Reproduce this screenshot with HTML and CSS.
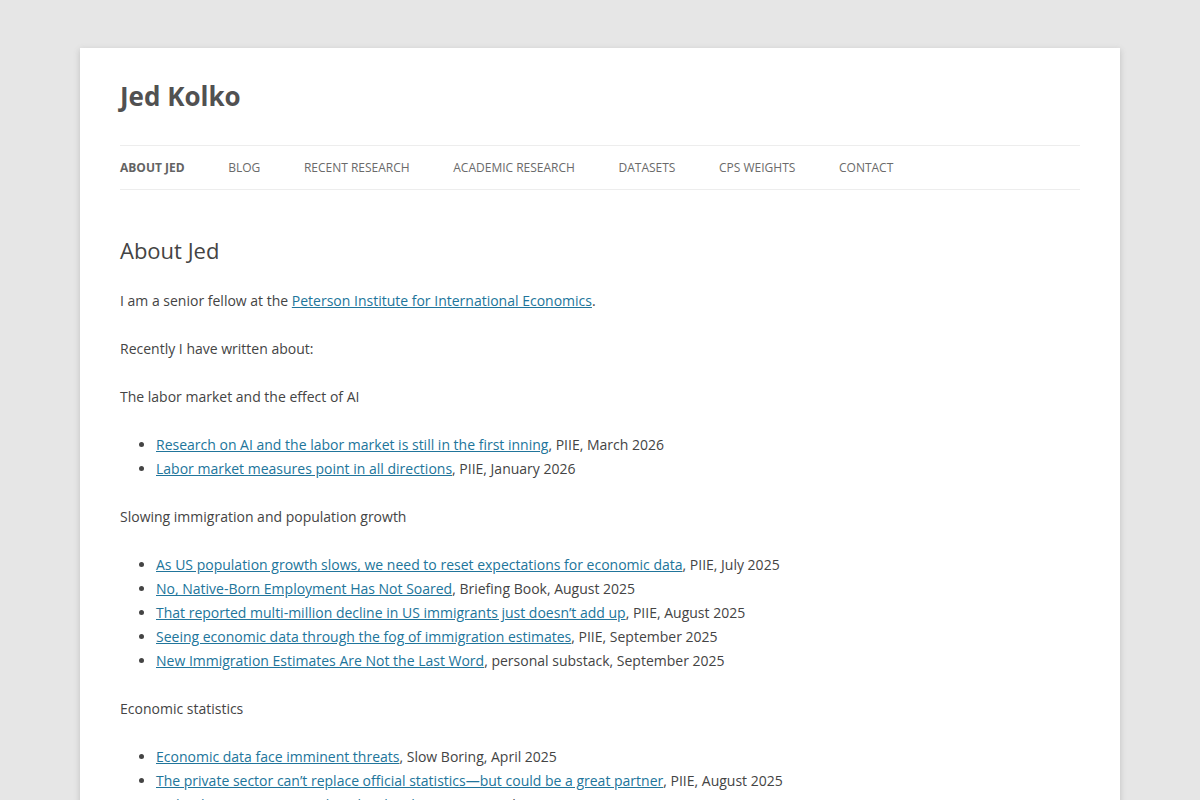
FILE: index.html
```html
<!DOCTYPE html>
<html lang="en">
<head>
  <meta charset="UTF-8">
  <meta name="viewport" content="width=device-width, initial-scale=1.0">
  <title>About Jed | Jed Kolko</title>
  <link rel="stylesheet" href="styles.css">
</head>
<body>
  <div class="site">
    <!-- Header -->
    <header class="site-header">
      <h1 class="site-title"><a href="#">Jed Kolko</a></h1>
      <nav class="main-navigation">
        <ul class="nav-menu">
          <li class="current"><a href="#">About Jed</a></li>
          <li><a href="#">Blog</a></li>
          <li><a href="#">Recent Research</a></li>
          <li><a href="#">Academic Research</a></li>
          <li><a href="#">Datasets</a></li>
          <li><a href="#">CPS Weights</a></li>
          <li><a href="#">Contact</a></li>
        </ul>
      </nav>
    </header>

    <!-- Content -->
    <main class="site-content">
      <article class="page">
        <header class="entry-header">
          <h1 class="entry-title">About Jed</h1>
        </header>
        <div class="entry-content">
          <p>I am a senior fellow at the <a href="#">Peterson Institute for International Economics</a>.</p>
          <p>Recently I have written about:</p>

          <p>The labor market and the effect of AI</p>
          <ul>
            <li><a href="#">Research on AI and the labor market is still in the first inning</a>, PIIE, March 2026</li>
            <li><a href="#">Labor market measures point in all directions</a>, PIIE, January 2026</li>
          </ul>

          <p>Slowing immigration and population growth</p>
          <ul>
            <li><a href="#">As US population growth slows, we need to reset expectations for economic data</a>, PIIE, July 2025</li>
            <li><a href="#">No, Native-Born Employment Has Not Soared</a>, Briefing Book, August 2025</li>
            <li><a href="#">That reported multi-million decline in US immigrants just doesn’t add up</a>, PIIE, August 2025</li>
            <li><a href="#">Seeing economic data through the fog of immigration estimates</a>, PIIE, September 2025</li>
            <li><a href="#">New Immigration Estimates Are Not the Last Word</a>, personal substack, September 2025</li>
          </ul>

          <p>Economic statistics</p>
          <ul>
            <li><a href="#">Economic data face imminent threats</a>, Slow Boring, April 2025</li>
            <li><a href="#">The private sector can’t replace official statistics—but could be a great partner</a>, PIIE, August 2025</li>
            <li><a href="#">Federal statistics are at risk in the shutdown</a>, PIIE, October 2025</li>
          </ul>
        </div>
      </article>
    </main>
  </div>
</body>
</html>
```

FILE: styles.css
```css
* {
  margin: 0;
  padding: 0;
  box-sizing: border-box;
}

body {
  background-color: #e6e6e6;
  font-family: "Open Sans", Helvetica, Arial, sans-serif;
  font-size: 14px;
  line-height: 24px;
  color: #444;
}

a {
  color: #21759b;
}

.site {
  max-width: 1040px;
  margin: 48px auto;
  padding: 0 40px;
  background-color: #fff;
  box-shadow: 0 2px 6px rgba(100, 100, 100, 0.3);
  overflow: hidden;
}

/* Header */
.site-header {
  padding-top: 24px;
}

.site-title {
  font-size: 26px;
  line-height: 48px;
  font-weight: bold;
}

.site-title a {
  color: #515151;
  text-decoration: none;
}

.main-navigation {
  margin-top: 25px;
}

.nav-menu {
  display: flex;
  gap: 43.6px;
  list-style: none;
  border-top: 1px solid #ededed;
  border-bottom: 1px solid #ededed;
}

.nav-menu li {
  font-size: 12px;
  line-height: 43px;
}

.nav-menu a {
  color: #6a6a6a;
  text-decoration: none;
  text-transform: uppercase;
  white-space: nowrap;
}

.nav-menu .current a {
  color: #636363;
  font-weight: bold;
}

/* Content */
.site-content {
  padding-top: 47px;
}

.entry-header {
  margin-bottom: 26px;
}

.entry-title {
  font-size: 22px;
  line-height: 1.2;
  font-weight: normal;
  color: #444;
}

.entry-content p {
  margin-bottom: 24px;
}

.entry-content ul {
  margin-bottom: 24px;
  list-style: disc outside;
}

.entry-content li {
  margin-left: 36px;
}
```
